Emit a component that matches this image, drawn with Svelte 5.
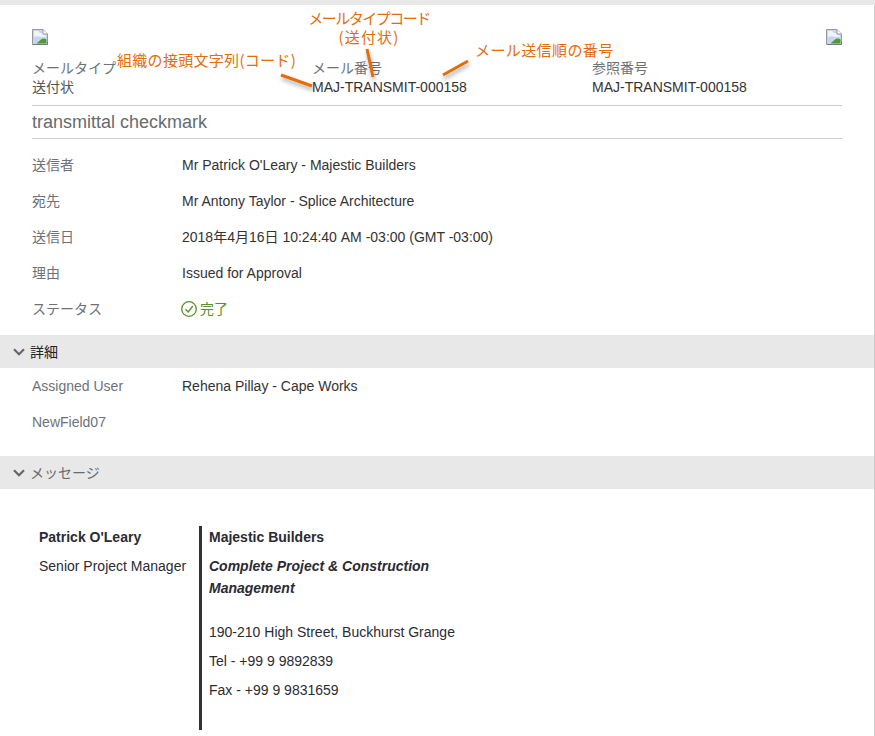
<script>
    const fields = [
        { label: '送信者', value: "Mr Patrick O'Leary - Majestic Builders" },
        { label: '宛先', value: 'Mr Antony Taylor - Splice Architecture' },
        { label: '送信日', value: '2018年4月16日 10:24:40 AM -03:00 (GMT -03:00)' },
        { label: '理由', value: 'Issued for Approval' }
    ];
    const meta = [
        { label: 'メールタイプ', value: '送付状' },
        { label: 'メール番号', value: 'MAJ-TRANSMIT-000158' },
        { label: '参照番号', value: 'MAJ-TRANSMIT-000158' }
    ];
</script>

{#snippet brokenImage()}
    <svg class="broken" width="16" height="16" viewBox="0 0 16 16">
        <path d="M0.5 0.5H11L15.5 5V15.5H0.5Z" fill="#c5d6f3" stroke="#999" />
        <path d="M2 2H6L8 4H10.5V5.5L14 6.5V8H9C6 7 3.5 7 2 8Z" fill="#eef3fc" />
        <path d="M4.5 14.5L9 10.5C11 9 13 9.5 14.5 10.5V14.5Z" fill="#4f9a33" />
        <path d="M1 15.5H15.5V13" fill="none" stroke="#777" />
        <path d="M11 0.5V5H15.5" fill="#fff" stroke="#999" />
    </svg>
{/snippet}

{#snippet chevron()}
    <svg class="chevron" width="12" height="8" viewBox="0 0 12 8">
        <path d="M1 1.2L6 6.2L11 1.2" fill="none" stroke="#666" stroke-width="2.2" />
    </svg>
{/snippet}

<div class="page">
    <div class="logos">
        {@render brokenImage()}
        {@render brokenImage()}
    </div>

    <div class="meta">
        {#each meta as m}
            <div class="meta-col">
                <span class="label">{m.label}</span>
                <span class="value">{m.value}</span>
            </div>
        {/each}
    </div>

    <h1 class="title">transmittal checkmark</h1>

    <div class="fields">
        {#each fields as f}
            <div class="field">
                <span class="label">{f.label}</span>
                <span class="value">{f.value}</span>
            </div>
        {/each}
        <div class="field">
            <span class="label">ステータス</span>
            <span class="status">
                <svg width="16" height="16" viewBox="0 0 16 16">
                    <circle cx="8" cy="8" r="7.3" fill="none" stroke="#5b8f2a" stroke-width="1.3" />
                    <path d="M4.5 8.2L7.2 11L11.8 5" fill="none" stroke="#5b8f2a" stroke-width="1.3" />
                </svg>
                完了
            </span>
        </div>
    </div>

    <div class="section-head dark">{@render chevron()}詳細</div>
    <div class="details">
        <div class="field">
            <span class="label">Assigned User</span>
            <span class="value">Rehena Pillay - Cape Works</span>
        </div>
        <div class="field">
            <span class="label">NewField07</span>
        </div>
    </div>

    <div class="section-head">{@render chevron()}メッセージ</div>

    <div class="signature">
        <div class="sig-left">
            <p><b>Patrick O'Leary</b></p>
            <p>Senior Project Manager</p>
        </div>
        <div class="sig-right">
            <p><b>Majestic Builders</b></p>
            <p class="slogan"><b><i>Complete Project &amp; Construction Management</i></b></p>
            <p>190-210 High Street, Buckhurst Grange</p>
            <p>Tel - +99 9 9892839</p>
            <p>Fax - +99 9 9831659</p>
        </div>
    </div>

    <!-- annotations -->
    <span class="note n1">組織の接頭文字列(コード)</span>
    <span class="note n2"><span class="tight">メールタイプコード</span><br /><span class="wide">(送付状)</span></span>
    <span class="note n3">メール送信順の番号</span>
    <svg class="marks" width="875" height="120" viewBox="0 0 875 120">
        <defs>
            <filter id="sh" x="-30%" y="-30%" width="160%" height="180%">
                <feDropShadow dx="1" dy="3" stdDeviation="2" flood-color="#000" flood-opacity="0.35" />
            </filter>
        </defs>
        <g stroke="#e36c0a" stroke-width="3" filter="url(#sh)">
            <path d="M281 75L312 86" />
            <path d="M367 49L373 77" />
            <path d="M443 75L468 61" />
        </g>
    </svg>
</div>

<style>
    :global(body) {
        margin: 0;
        background: #fff;
    }

    .page {
        position: relative;
        box-sizing: border-box;
        width: 875px;
        height: 736px;
        overflow: hidden;
        border-top: 5px solid #e8e8e8;
        font-family: "Liberation Sans", "Noto Sans CJK JP", sans-serif;
        font-size: 14px;
        line-height: 18px;
        color: #333;
    }

    .page::before {
        content: '';
        position: absolute;
        inset: -1px 0 0 0;
        border-top: 1px solid #ccc;
        border-right: 1px solid #ccc;
    }

    .logos {
        display: flex;
        justify-content: space-between;
        padding: 24px 33px 0 32px;
        height: 16px;
    }

    .broken {
        display: block;
    }

    .meta {
        display: grid;
        grid-template-columns: repeat(3, 280px);
        margin: 14px 32px 0;
        width: 810px;
        height: 46px;
        border-bottom: 1px solid #ccc;
    }

    .meta-col {
        display: flex;
        flex-direction: column;
        gap: 1px;
    }

    .label {
        color: #6d7278;
    }

    .value {
        color: #333;
    }

    .meta-col:first-child .value {
        color: #555;
    }

    .title {
        margin: 0 32px;
        width: 810px;
        height: 32px;
        border-bottom: 1px solid #ccc;
        font-size: 18px;
        font-weight: normal;
        line-height: 32px;
        color: #666b70;
    }

    .fields {
        padding: 8px 0;
    }

    .field {
        display: grid;
        grid-template-columns: 150px 1fr;
        align-items: center;
        height: 36px;
        padding-left: 32px;
    }

    .status {
        display: flex;
        align-items: center;
        gap: 3px;
        margin-left: -1px;
        color: #5b8f2a;
    }

    .section-head {
        display: flex;
        align-items: center;
        gap: 5px;
        height: 33px;
        padding-left: 13px;
        background: #e8e8e8;
        color: #666b70;
    }

    .section-head.dark {
        color: #222;
    }

    .details {
        height: 88px;
    }

    .signature {
        display: flex;
        margin: 37px 0 0 39px;
        height: 204px;
        color: #2b2b33;
    }

    p {
        margin: 0 0 11px;
        line-height: 18px;
    }

    .sig-left {
        width: 160px;
        padding-top: 2px;
    }

    .sig-right {
        width: 250px;
        padding: 2px 0 0 7px;
        border-left: 3px solid #333;
    }

    .slogan {
        line-height: 22px;
        margin-top: -2px;
        margin-bottom: 24px;
    }

    .note {
        position: absolute;
        font-size: 15px;
        line-height: 19px;
        color: #e36c0a;
        white-space: nowrap;
        font-family: "Noto Sans CJK JP", sans-serif;
    }

    .tight {
        letter-spacing: -1.5px;
    }

    .wide {
        letter-spacing: 1.2px;
    }

    .n1 {
        left: 117px;
        top: 45px;
        letter-spacing: 0.3px;
    }

    .n2 {
        left: 308px;
        top: 3px;
        width: 122px;
        text-align: center;
    }

    .n3 {
        left: 475px;
        top: 35px;
        letter-spacing: 0.4px;
    }

    .marks {
        position: absolute;
        left: 0;
        top: -5px;
        pointer-events: none;
    }
</style>
